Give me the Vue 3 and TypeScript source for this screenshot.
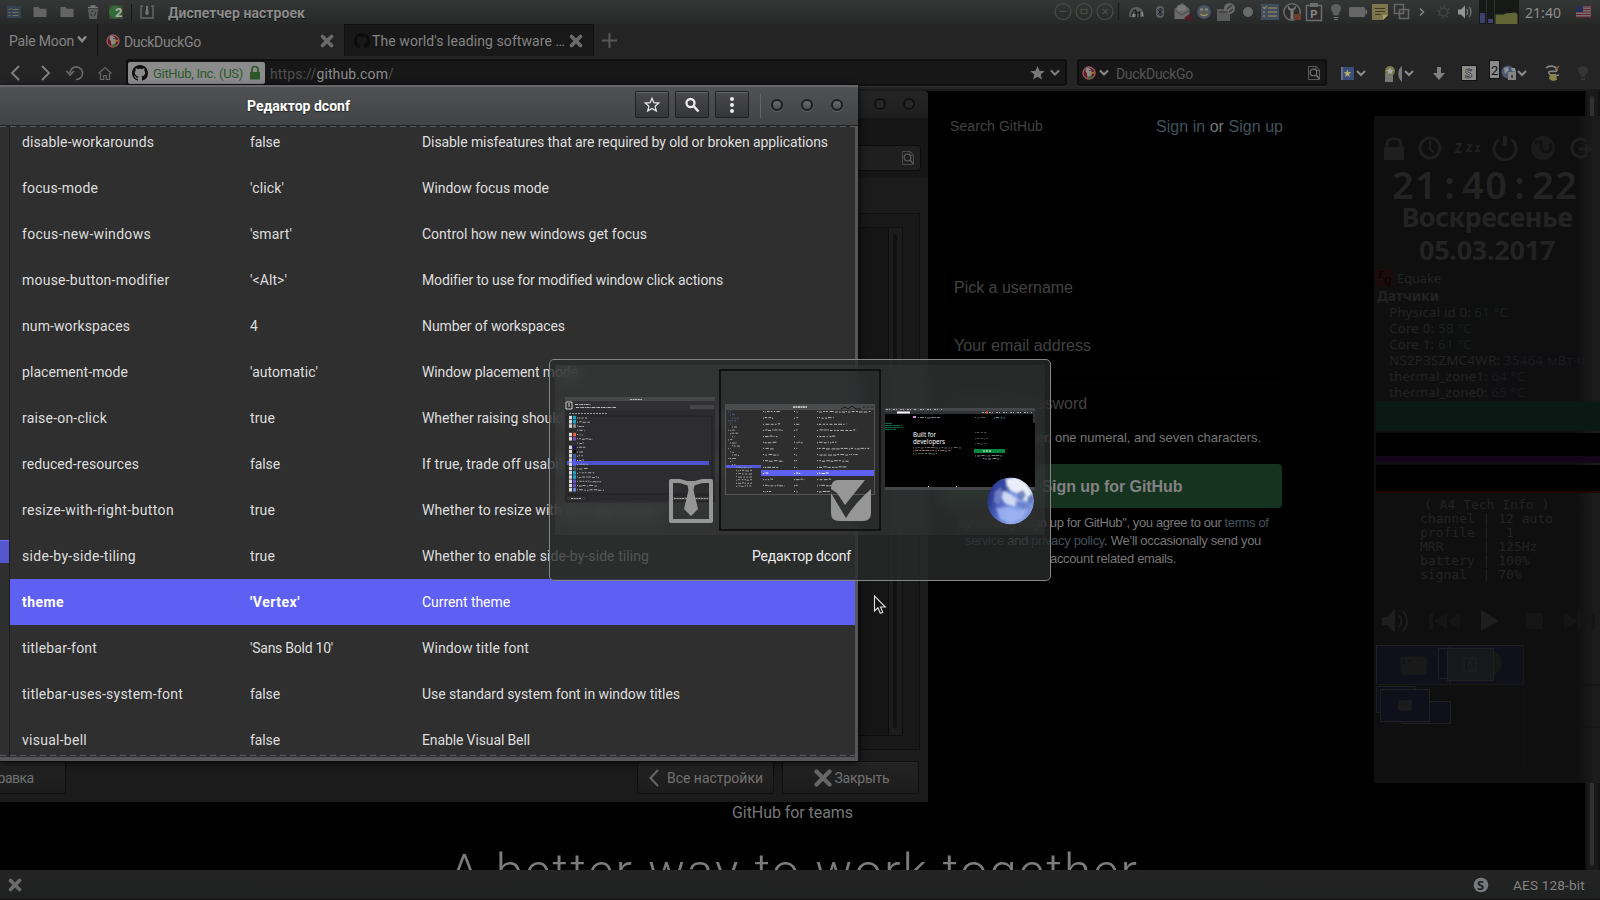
<script setup lang="ts">
interface Setting { name: string; nameW: number; value: string; valueW: number; text: string; textW: number; on?: boolean }
interface Icon { w: number; art: string }
interface Dash { x: number; y: number; w: number; h: number; c: string }

// Adjusts tracking so that a label takes the given width.
const vFit = {
  mounted(el: HTMLElement, binding: { value: number }) {
    const natural = el.getBoundingClientRect().width
    const count = (el.textContent ?? '').trim().length
    if (count > 1 && natural > 0) el.style.letterSpacing = `${((binding.value - natural) / count).toFixed(3)}px`
  },
}

const settings: Setting[] = [
  { name: 'disable-workarounds', nameW: 132, value: 'false', valueW: 30, text: 'Disable misfeatures that are required by old or broken applications', textW: 406 },
  { name: 'focus-mode', nameW: 76, value: "'click'", valueW: 34, text: 'Window focus mode', textW: 127 },
  { name: 'focus-new-windows', nameW: 129, value: "'smart'", valueW: 42, text: 'Control how new windows get focus', textW: 225 },
  { name: 'mouse-button-modifier', nameW: 147, value: "'<Alt>'", valueW: 37, text: 'Modifier to use for modified window click actions', textW: 300 },
  { name: 'num-workspaces', nameW: 108, value: '4', valueW: 8, text: 'Number of workspaces', textW: 143 },
  { name: 'placement-mode', nameW: 106, value: "'automatic'", valueW: 68, text: 'Window placement mode', textW: 156 },
  { name: 'raise-on-click', nameW: 85, value: 'true', valueW: 25, text: 'Whether raising should be a side-effect of other user interactions', textW: 398 },
  { name: 'reduced-resources', nameW: 117, value: 'false', valueW: 30, text: 'If true, trade off usability for less resource usage', textW: 308 },
  { name: 'resize-with-right-button', nameW: 152, value: 'true', valueW: 25, text: 'Whether to resize with the right button', textW: 240 },
  { name: 'side-by-side-tiling', nameW: 114, value: 'true', valueW: 25, text: 'Whether to enable side-by-side tiling', textW: 227 },
  { name: 'theme', nameW: 42, value: "'Vertex'", valueW: 50, text: 'Current theme', textW: 88, on: true },
  { name: 'titlebar-font', nameW: 75, value: "'Sans Bold 10'", valueW: 83, text: 'Window title font', textW: 107 },
  { name: 'titlebar-uses-system-font', nameW: 161, value: 'false', valueW: 30, text: 'Use standard system font in window titles', textW: 258 },
  { name: 'visual-bell', nameW: 65, value: 'false', valueW: 30, text: 'Enable Visual Bell', textW: 108 },
]

const hub = 'M8 0C3.58 0 0 3.58 0 8c0 3.54 2.29 6.53 5.47 7.59.4.07.55-.17.55-.38 0-.19-.01-.82-.01-1.49-2.01.37-2.53-.49-2.69-.94-.09-.23-.48-.94-.82-1.13-.28-.15-.68-.52-.01-.53.63-.01 1.08.58 1.23.82.72 1.21 1.87.87 2.33.66.07-.52.28-.87.51-1.07-1.78-.2-3.64-.89-3.64-3.95 0-.87.31-1.59.82-2.15-.08-.2-.36-1.02.08-2.12 0 0 .67-.21 2.2.82.64-.18 1.32-.27 2-.27s1.36.09 2 .27c1.53-1.04 2.2-.82 2.2-.82.44 1.1.16 1.92.08 2.12.51.56.82 1.27.82 2.15 0 3.07-1.87 3.75-3.65 3.95.29.25.54.73.54 1.48 0 1.07-.01 1.93-.01 2.2 0 .21.15.46.55.38A8.01 8.01 0 0 0 16 8c0-4.42-3.58-8-8-8z'

const duck = `<circle cx="11" cy="12" r="7" fill="#6b1a20"/><circle cx="11" cy="12" r="6" fill="none" stroke="#8a8a8a" stroke-width=".9"/>
<path d="M8.2 7.5c3-1.2 5.4.6 5.4 3.5l-.3 6h-3.600l-1-5c-1.200-1-1.600-3-.5-4.500z" fill="#8b8b8b"/><path d="M12 11.500l4-.4.200 1.200-4 .9z" fill="#a08436"/><path d="M10.500 15l4 .5-1 2.300h-3z" fill="#2a6a2c"/><circle cx="12" cy="9.500" r=".8" fill="#26354e"/>`
const folder = '<path d="M4 7h5l1.500 1.700H17V17H4z" fill="#646464"/>'
const cross = '<path d="M6.500 7.500l9 9m0-9l-9 9" stroke="#6a6a6a" stroke-width="3.800" stroke-linecap="round"/>'
const chevron = '<path d="M1 9.500l4 4 4-4" fill="none" stroke="#8b8b8b" stroke-width="2"/>'
const pageSearch = '<path d="M5.500 5.500h8l3 3.500v9.500h-11z M13 5.500v4h3.500" fill="none" stroke="#5a5a5a" stroke-width="1"/><circle cx="10.500" cy="11.500" r="3.300" fill="none" stroke="#6e6e6e" stroke-width="1.300"/><path d="M13 14l3.500 4" stroke="#6e6e6e" stroke-width="1.600"/>'

const launchers: Icon[] = [
  { w: 27, art: '<rect x="4.500" y="6" width="14" height="12" fill="#334056"/><path d="M6 9l1 1 2-2M10 9.500h6M10 12.500h6M10 15.500h6M6 12.500h2M6 15.500h2" stroke="#75744f" stroke-width="1" fill="none"/>' },
  { w: 27, art: folder }, { w: 27, art: folder },
  { w: 24, art: '<path d="M6 9h10l-1.200 10H7.200z" fill="#5d5d5d"/><path d="M6 7.500h10M8.500 6h5" stroke="#777" stroke-width="1.300"/><circle cx="11" cy="13.500" r="2.500" fill="none" stroke="#2b2b2b" stroke-dasharray="3 1.500"/>' },
  { w: 24, art: '<rect x="3" y="5" width="14" height="14" fill="#394537"/><circle cx="9.500" cy="12" r="6.500" fill="#356b32"/><text x="9" y="16.500" font-size="13" font-weight="700" font-family="Roboto" fill="#aaa">2</text>' },
]

const tray: Icon[] = [
  { w: 25, art: '<path d="M3.500 17c0-7 3-10 8-10 4 0 7 4 7 10z" fill="#5d5d5d"/><path d="M6 16c1-5 2-6 4-6v3h4v-2M11 11v6M14 12v5" stroke="#202020" fill="none" stroke-width="1.300"/><path d="M7 14h2v3H7zM16 12h1.500v4H16z" fill="#8a8a8a"/>' },
  { w: 22, art: '<rect x="7" y="6" width="8" height="12" rx="4" fill="#5a5f66"/><path d="M8.500 9.500l5 4.500-2.500 2V8l2.500 2-5 4.500" fill="none" stroke="#1f1f1f"/>' },
  { w: 22, art: '<path d="M3.500 9l7.500-6 7.500 6v10h-15z" fill="#6a6a6a"/><path d="M3.500 10l7.500 5 7.500-5" fill="none" stroke="#444"/><rect x="6.500" y="5.500" width="8" height="5" fill="#7a7a7a"/><path d="M20 13v9l-7-4z" fill="#571926"/>' },
  { w: 22, art: '<circle cx="11" cy="12" r="6.300" fill="#565b55" stroke="#444d68" stroke-width="1.500"/><path d="M7 9.500h3M12 9.500h3" stroke="#868686" stroke-width="2"/><path d="M7.500 14c2 2 5 2 7 0" fill="none" stroke="#99955c" stroke-width="1.300"/>' },
  { w: 22, art: '<path d="M2 9h13v12H2z" fill="#5b5b5b"/><circle cx="14.500" cy="8.500" r="5.500" fill="#696969"/><path d="M4 12h9M12 9l5-4M14 12l4-3" stroke="#333" stroke-width="1.200"/>' },
  { w: 22, art: '<circle cx="11" cy="12" r="5" fill="#6a6a6a"/>' },
  { w: 22, art: '<rect x="2" y="4" width="18" height="16" fill="#414c5f"/><path d="M9 8h9M9 12h9M9 16h9M4 12h2M4 16h2M4 7l1.500 1.500L8 6" stroke="#827f5d" stroke-width="1.300" fill="none"/>' },
  { w: 22, art: '<circle cx="11" cy="12" r="8.200" fill="#2d2d2d" stroke="#6b6b6b" stroke-width="1.500"/><path d="M7 5.500c-1 3 1 5 2.500 5v9h3v-9c2-1 3-3 2-5l-2 3h-3z" fill="#7a7a7a"/><rect x="13" y="14" width="7" height="6" fill="#6c3c2b"/>' },
  { w: 22, art: '<path d="M3.500 5.500h15v15h-15z" fill="#2c2c2c" stroke="#6d6d6d" stroke-width="1.500"/><path d="M7 3h8v4H7z" fill="#6d6d6d"/><text x="7.200" y="17.500" font-size="11" font-weight="700" font-family="Roboto" fill="#8a8a8a">P</text>' },
  { w: 22, art: '<path d="M6 8.500c0-6 10-6 10 0 0 3-2.500 4-2.500 7h-5c0-3-2.500-4-2.500-7z" fill="#5f5f5f"/><path d="M8.500 17.500h5M9 19.500h4" stroke="#757575"/>' },
  { w: 22, art: '<rect x="2" y="7" width="16" height="10" rx="1.500" fill="#676767"/><path d="M18.500 9.500c2 0 2 5 0 5z" fill="#7a7a7a"/>' },
  { w: 22, art: '<path d="M3 4h16v11l-5 5H3z" fill="#7d754b"/><path d="M6 8.500h10M6 11.500h10M6 14.500h6" stroke="#3d3923"/><path d="M19 15l-5 5v-5z" fill="#aaa06d"/>' },
  { w: 20, art: '<path d="M4.500 4.500h9v9h-9zM9.500 9.500h9v9h-9z" fill="#303030" stroke="#666" stroke-width="1.600"/>' },
  { w: 20, art: '<path d="M10 8.500l3.500 3.500-3.500 3.500" fill="none" stroke="#888" stroke-width="1.400"/>' },
  { w: 23, art: '<circle cx="12" cy="12" r="4" fill="none" stroke="#494949" stroke-width="1.200"/><circle cx="12" cy="12" r="5.800" fill="none" stroke="#494949" stroke-width="1.500" stroke-dasharray="1.500 3.050"/>' },
  { w: 22, art: '<path d="M4 9.500h3l4-4v13l-4-4H4z" fill="#959595"/><path d="M12.500 9c1.500 1.500 1.500 4.500 0 6M15 7c2.500 2.500 2.500 7.500 0 10" fill="none" stroke="#777" stroke-width="1.300"/>' },
]

const seeded = (seed: number) => () => ((seed = (seed * 16807) % 2147483647) / 2147483647)

function words(seed: number, x: number, y: number, w: number, color: string): Dash[] {
  const rnd = seeded(seed)
  const out: Dash[] = []
  let at = x
  while (at < x + w) {
    const len = 1 + rnd() * 3
    out.push({ x: at, y: y + Math.round(rnd()) * 0.5, w: Math.min(len, x + w - at), h: 1, c: color })
    at += len + 0.6 + rnd()
  }
  return out
}

const managerLines: Dash[] = [10, 14, 7, 8, 6, 16, 7, 9, 7, 6, 7, 12, 11, 18, 22, 24, 20, 27]
  .flatMap((w, i) => words(i * 31 + 7, 12, 20 + i * 4.25, w, '#a5a5a5'))
const managerIcons = ['#1aa6c9', '#1aa6c9', '#888', '#2e2e2e', '#f0603e', '#7a4db8', '#2e2e2e', '#221060', '#101010', '#3b62a8', '#5b5bf0', '#5b5bf0', '#555', '#1aa6c9', '#1aa6c9', '#6a50c8', '#6a50c8', '#6a88e0']
const editorLines: Dash[] = settings.flatMap((s, i) => {
  const y = 7 + i * 6.15
  const c = s.on ? '#fff' : '#b4b4b4'
  return [
    ...words(i + 11, 38, y, s.nameW / 7.5, c),
    ...words(i + 41, 69, y, s.valueW / 8, c),
    ...words(i + 71, 92, y, s.textW / 7.6, c),
  ]
})
const treeLines: Dash[] = Array.from({ length: 25 }, (_, i) => words(i + 5, 3 + (i > 17 ? 8 : (i % 3) * 2), 7 + i * 3.1, i > 17 ? 16 : 3 + (i % 4) * 2, i < 5 ? '#53578c' : '#999')).flat()
const siteLines: Dash[] = [
  ...words(2, 33, 9, 22, '#8899ab'), ...words(3, 90, 9, 10, '#667'), ...words(4, 109, 9, 11, '#6aa0c0'),
  ...words(5, 28, 39, 48, '#777'), ...words(6, 28, 42, 38, '#a77'), ...words(9, 28, 45, 24, '#777'),
  ...words(8, 90, 24, 12, '#555'), ...words(12, 90, 30, 13, '#555'), ...words(14, 90, 35, 12, '#555'),
  ...words(15, 90, 47, 28, '#889'), ...words(16, 98, 50, 18, '#99a'),
]

const sensors = [
  { label: 'Physical id 0:', value: '61 °C', w: 119, hue: 'cool' },
  { label: 'Core 0:', value: '58 °C', w: 83, hue: 'cool' },
  { label: 'Core 1:', value: '61 °C', w: 83, hue: 'cool' },
  { label: 'NS2P3SZMC4WR:', value: '35464 мВт·ч', w: 196, hue: 'blue' },
  { label: 'thermal_zone1:', value: '64 °C', w: 136, hue: 'blue' },
  { label: 'thermal_zone0:', value: '65 °C', w: 136, hue: 'blue' },
]
const mouseInfo = ['channel | 12 auto', 'profile |  1', 'MRR     | 125Hz', 'battery | 100%', 'signal  | 70%']
</script>

<template>
  <div class="desktop">
    <div class="browser">
      <header class="panel">
        <svg v-for="(i, n) in launchers" :key="n" :width="i.w" height="24" :viewBox="`${(22 - i.w) / 2} 0 ${i.w} 24`" v-html="i.art" />
        <span class="rule" />
        <svg width="31" height="24" viewBox="0 0 31 24"><path d="M11 6H9v12h12V6h-2" fill="none" stroke="#686868" stroke-width="1.400" /><path d="M13.500 6h3l-.7 2 1 5.500-1.800 2-1.800-2 1-5.500z" fill="#777" /></svg>
        <strong v-fit="137" class="panel-title">Диспетчер настроек</strong>
        <div class="tray">
          <svg width="72" height="24" viewBox="0 0 72 24" fill="none" stroke="#4c4c48" stroke-width="1.200"><circle cx="11" cy="11.500" r="8" /><circle cx="32" cy="11.500" r="8" /><circle cx="53" cy="11.500" r="8" /><path d="M7.500 11.500h7M29 9.500h6v4h-6zM50.500 9l5 5m0-5l-5 5" /><path d="M66.500 3v17" stroke="#1c1c1c" /></svg>
          <svg v-for="(i, n) in tray" :key="n" :width="i.w" height="24" :viewBox="`${(22 - i.w) / 2} 0 ${i.w} 24`" v-html="i.art" />
          <svg class="load" width="40" height="24" viewBox="0 0 40 24"><path d="M0 0h7v24H0zM8 0h7v24H8zM16 0h24v24H16z" fill="#171917" /><path d="M1 13h5v10H1zM9 19h5v4H9z" fill="#3c4172" /><path d="M16.500 14.500h8l2-1 10-1 2 2V24h-22z" fill="#626637" /></svg>
          <span v-fit="36" class="clock">21:40</span>
          <svg width="32" height="24" viewBox="0 0 32 24"><path d="M15 6h15v11H15z" fill="#707070" /><path d="M15 7h15M15 9.500h15M15 12h15M15 14.500h15M15 17h15" stroke="#70242e" stroke-width="1.200" /><path d="M15 6h7v6h-7z" fill="#262e58" /></svg>
        </div>
      </header>

      <nav class="tabs">
        <div class="app-menu"><span v-fit="65">Pale Moon</span><svg width="14" height="22" viewBox="0 0 14 22"><path d="M3 7.500l4 4.500 4-4.500" fill="none" stroke="#898989" stroke-width="2.500" /></svg></div>
        <div class="tab">
          <svg width="22" height="24" v-html="duck" />
          <span v-fit="77">DuckDuckGo</span>
          <svg class="close" width="22" height="24" v-html="cross" />
        </div>
        <div class="tab current">
          <svg width="16" height="16" viewBox="0 0 16 16"><path :d="hub" fill="#0c0c0c" /></svg>
          <span v-fit="193">The world's leading software …</span>
          <svg class="close" width="22" height="24" v-html="cross" />
        </div>
        <svg width="32" height="32" viewBox="0 0 32 32"><path d="M8 16.500h15M15.500 9v15" stroke="#585858" stroke-width="2" /></svg>
      </nav>

      <nav class="nav">
        <svg width="126" height="30" viewBox="0 0 126 30" fill="none" stroke="#808080" stroke-width="1.900"><path d="M19 8l-7 7 7 7M42 8l7 7-7 7" /><path d="M70 15a6.300 6.300 0 1 1 6 6.500M66.500 13l3.500 4 4-4" stroke="#6b6b6b" stroke-width="1.600" /><path d="M98.500 15.500l6.500-6 6.500 6M100.500 15v6.500h3.200v-4h2.600v4h3.200V15" stroke="#686868" stroke-width="1.200" /></svg>
        <div class="url">
          <div class="identity">
            <svg width="16" height="16" viewBox="0 0 16 16"><path :d="hub" fill="#111" /></svg>
            <span v-fit="90">GitHub, Inc. (US)</span>
            <svg width="12" height="16" viewBox="0 0 12 16"><path d="M3 8V4.500c0-4 6-4 6 0V8" fill="none" stroke="#2b572b" stroke-width="1.700" /><rect x="1" y="7" width="10" height="7.500" fill="#2b572b" /></svg>
          </div>
          <span v-fit="124" class="address">https://<b>github.com</b>/</span>
          <svg class="url-end" width="40" height="24" viewBox="0 0 40 24"><path d="M12.500 5l2 4.800 5.200.4-4 3.300 1.300 5.100-4.500-2.800-4.500 2.800 1.300-5.100-4-3.300 5.200-.4z" fill="#777" /><path d="M26 9.500l4 4 4-4" fill="none" stroke="#828282" stroke-width="2" /></svg>
        </div>
        <div class="search">
          <svg width="22" height="24" v-html="duck" /><svg width="11" height="24" v-html="chevron" />
          <span v-fit="77">DuckDuckGo</span>
          <svg class="close" width="22" height="24" v-html="pageSearch" />
        </div>
        <svg width="273" height="30" viewBox="0 0 273 30">
          <path d="M14 9h13v13H14z" fill="#3b4d79" /><path d="M14 9h2v13h-2z" fill="#66718a" /><path d="M20.500 11.500l1.100 2.600 2.800.2-2.200 1.800.7 2.800-2.400-1.500-2.400 1.500.7-2.800-2.200-1.800 2.800-.2z" fill="#b0aa70" /><path d="M30 13l4 4 4-4M78 13l4 4 4-4M191 13l4 4 4-4" fill="none" stroke="#8b8b8b" stroke-width="2" />
          <path d="M58 15h8v9h-8z" fill="#777" /><circle cx="63" cy="13" r="5" fill="#77784b" /><path d="M63 9.500l1 2.300 2.600.3-1.900 1.800.6 2.500-2.300-1.300-2.300 1.300.6-2.500-1.900-1.800 2.600-.3z" fill="#aaa" /><path d="M75 8c-5 3-5 12 0 16z" fill="#777" />
          <path d="M110 9h4v6h4l-6 7-6-7h4z" fill="#808080" /><rect x="134.500" y="7.500" width="15" height="15" fill="#8b8b8b" stroke="#111" /><text x="138" y="20" font-size="13" font-weight="700" font-family="Noto Sans" fill="#aaa" stroke="#333" stroke-width=".8">S</text>
          <circle cx="181" cy="14" r="6.500" fill="#4c5871" /><path d="M177 10l4-1 1 3-4 4zM184 10h4l1 4-4-1z" fill="#8a9298" /><rect x="181" y="14" width="8" height="8" fill="#858585" /><rect x="184" y="17" width="2" height="3" fill="#444" />
          <rect x="162.500" y="2.500" width="10" height="18" fill="#8b8b8b" stroke="#111" /><text x="164" y="16.500" font-size="13" font-family="Roboto" fill="#111">2</text>
          <path d="M219 10c4-4 11-1 11 2s-7 0-8 2 3 5 10 3" fill="none" stroke="#858585" stroke-width="1.700" /><path d="M223 16h6l1 6-4 1-4-2z" fill="#87854a" /><path d="M228 12l4-4" stroke="#875a33" stroke-width="1.500" />
          <path d="M251 12c0-5 10-5 10 0 0 3-3 4-3 7h-4c0-3-3-4-3-7zM254 20h4v2h-4z" fill="#353535" />
        </svg>
      </nav>

      <main class="page">
        <span v-fit="93" class="gh-search">Search GitHub</span>
        <span v-fit="127" class="gh-login"><a>Sign in</a> or <a>Sign up</a></span>
        <form class="signup">
          <div class="field"><span v-fit="119">Pick a username</span></div>
          <div class="field"><span v-fit="137">Your email address</span></div>
          <div class="field"><span v-fit="133">Create a password</span></div>
          <p v-fit="338" class="hint">Use at least one letter, one numeral, and seven characters.</p>
          <div class="join"><span v-fit="141">Sign up for GitHub</span></div>
          <div class="terms"><span v-fit="311">By clicking "Sign up for GitHub", you agree to our <a>terms of</a></span><span v-fit="296"><a>service</a> and <a>privacy policy</a>. We’ll occasionally send you</span><span v-fit="126">account related emails.</span></div>
        </form>
        <div class="teams"><span v-fit="121">GitHub for teams</span></div>
        <h1 v-fit="690">A better way to work together</h1>
        <div class="scrollbar" />
      </main>

      <footer class="addons">
        <svg width="22" height="24" viewBox="0 0 22 24" v-html="cross" />
        <svg class="noscript" width="18" height="18" viewBox="0 0 18 18"><circle cx="9" cy="9" r="7.300" fill="#777b7e" /><text x="5" y="13.500" font-size="13" font-weight="700" font-family="Noto Sans" fill="#1e2022">S</text></svg>
        <span v-fit="72">AES 128-bit</span>
      </footer>
    </div>

    <aside class="gadgets">
      <svg width="226" height="56" viewBox="0 0 226 56" fill="none" stroke="#1f1f1f" stroke-width="3"><path d="M55 8h115M56 11h115" stroke-width="1" stroke="#151515" stroke-dasharray="1 1" /><path d="M10 31h20v13H10z" fill="#1f1f1f" stroke="none" /><path d="M13 31v-3c0-7 14-7 14 0v3" /><circle cx="56" cy="32" r="10" /><path d="M56 25v8l4 4M82 28h5l-5 8h6M93 29h4l-4 6h5M102 30h3l-3 5h4" stroke-width="2" /><path d="M125 23.500a11 11 0 1 0 12 0" /><path d="M131 20v10" stroke-width="4.500" /><circle cx="169" cy="32" r="12" fill="#1b1b1b" stroke="none" /><path d="M161 26h6v5a5 5 0 1 0 9-3" stroke="#101010" stroke-width="3" /><path d="M213 25.500a9 9 0 1 0 0 13M205 33h10" /><path d="M211 28l9 5-9 5z" fill="#1f1f1f" stroke="none" /></svg>
      <div v-fit="189" class="time">21<i>:</i>40<i>:</i>22</div>
      <div class="day"><span v-fit="171">Воскресенье</span></div>
      <div class="day"><span v-fit="136">05.03.2017</span></div>
      <div class="equake"><svg width="18" height="18"><rect width="18" height="18" rx="2" fill="#1c0b0c" /><text x="3" y="9" font-size="10" font-style="italic" font-weight="700" font-family="Liberation Serif" fill="#040404">E</text><text x="9" y="15" font-size="10" font-style="italic" font-weight="700" font-family="Liberation Serif" fill="#040404">Q</text></svg><span v-fit="44">Equake</span></div>
      <div class="sensor-head"><span v-fit="62">Датчики</span></div>
      <div v-for="s in sensors" :key="s.label" class="sensor"><span v-fit="s.w">{{ s.label }} <em :class="s.hue">{{ s.value }}</em></span></div>
      <div class="graph green" /><div class="graph violet" /><div class="graph red" />
      <pre class="mouse-head">( A4 Tech Info )</pre>
      <pre v-for="m in mouseInfo" :key="m" class="mouse">{{ m }}</pre>
      <svg class="media" width="226" height="32" viewBox="0 0 226 32" fill="#1e1e1e"><path d="M8 12h5l8-8v24l-8-8H8z" /><path d="M25 10q5 6 0 12M29 6q8 10 0 20" fill="none" stroke="#1e1e1e" stroke-width="2" /><path d="M107 5l18 11-18 10z" /><path d="M55 8h4v16h-4zM73 8v16l-14-8zM86 8v16l-13-8zM152 8h17v16h-17zM190 8l14 8-14 8zM204 8l13 8-13 8zM217 8h4v16h-4z" fill="#151515" /></svg>
      <svg width="226" height="140" viewBox="0 0 226 140" fill="#10101a" stroke="#202022"><path d="M2.500 2.500h147v39h-147zM76 2v39" /><rect x="64.500" y="5.500" width="55" height="30" /><circle cx="116" cy="20" r="12" fill="#171716" stroke="none" /><rect x="73.500" y="5.500" width="46" height="32" fill="#17181a" /><path d="M90 15h12v13H90zM96 17l2 7-2 3-2-3z" fill="none" /><rect x="26.500" y="13.500" width="26" height="18" rx="2" fill="#191919" stroke="#151517" /><path d="M28 17l3 2-3 2M34 18h3" fill="none" stroke="#0d0d0d" /><path d="M2.500 43.500h39v26h-39zM27.500 58.500h49v22h-49z" /><rect x="6.500" y="46.500" width="49" height="32" /><path d="M25 58h12v9H25z" fill="#1b1b1b" /><path d="M76 82v44M150 0v126M78 84h148M0 42h226" stroke="#121212" fill="none" /></svg>
    </aside>

    <section class="manager">
      <div class="manager-bar"><span class="knob" /><span class="knob" /></div>
      <div class="manager-head"><div class="manager-search"><svg width="22" height="24" v-html="pageSearch" /></div></div>
      <div class="manager-frame"><div class="manager-list"><div class="groove" /></div></div>
      <div class="manager-buttons">
        <div class="btn help"><span v-fit="52">Справка</span></div>
        <div class="btn"><svg width="12" height="20" viewBox="0 0 12 20"><path d="M10 2L2.500 10 10 18" fill="none" stroke="#666" stroke-width="2" /></svg><span v-fit="96">Все настройки</span></div>
        <div class="btn tight"><svg width="18" height="20" viewBox="0 0 18 20"><path d="M2.500 3.500l13 13m0-13l-13 13" stroke="#666" stroke-width="4.200" stroke-linecap="round" /></svg><span v-fit="55">Закрыть</span></div>
      </div>
    </section>

    <section class="editor">
      <div class="editor-bar">
        <strong v-fit="103" class="editor-title">Редактор dconf</strong>
        <div class="tool"><svg width="18" height="18" viewBox="0 0 18 18"><path d="M9 2.200l1.900 4.500 4.900.4-3.700 3.200 1.200 4.800L9 12.500l-4.300 2.600 1.200-4.800-3.700-3.200 4.900-.4z" fill="none" stroke="#eee" stroke-width="1.200" /></svg></div>
        <div class="tool"><svg width="18" height="18" viewBox="0 0 18 18"><circle cx="7.500" cy="7" r="4" fill="none" stroke="#eee" stroke-width="2.300" /><path d="M10.500 10l5 5.500" stroke="#eee" stroke-width="2.500" /></svg></div>
        <div class="tool"><svg width="18" height="18" viewBox="0 0 18 18" fill="#eee"><circle cx="9" cy="3" r="2" /><circle cx="9" cy="9" r="2" /><circle cx="9" cy="15" r="2" /></svg></div>
        <span class="divider" /><span class="knob" /><span class="knob" /><span class="knob" />
      </div>
      <div class="editor-body">
        <div class="tree"><div class="tree-on" /></div>
        <div class="rows">
          <div v-for="s in settings" :key="s.name" class="row" :class="{ on: s.on }">
            <div><span v-fit="s.nameW">{{ s.name }}</span></div>
            <div><span v-fit="s.valueW">{{ s.value }}</span></div>
            <div><span v-fit="s.textW">{{ s.text }}</span></div>
          </div>
        </div>
      </div>
    </section>

    <div class="switcher">
      <div class="thumbs">
        <div class="thumb">
          <svg width="162" height="162" viewBox="0 0 162 162">
            <g transform="translate(8 28)">
              <rect width="150" height="106" fill="#303032" /><rect width="150" height="4" fill="#48484b" /><path d="M65 2.500h12" stroke="#bbb" stroke-dasharray="2 .6" /><path d="M0 13h150v91H0z" fill="#2b2b2d" /><path d="M1 5h6v7H1zM4 6v4" fill="none" stroke="#ccc" /><path d="M10 7.500h16M11 10.500h40" stroke="#bbb" stroke-dasharray="3 .8 1 .5" /><path d="M125 8h24v4h-24z" fill="#454548" /><path d="M4 16.500h38" stroke="#999" stroke-dasharray="2 1" />
              <path d="M2 19h145v78H2z" fill="#2d2d2f" stroke="#1d1d1d" stroke-width=".7" /><path d="M2 64h142v4H2z" fill="#4e51d0" />
              <template v-for="(c, i) in managerIcons" :key="i"><rect x="4" :y="18.800 + i * 4.250" width="3" height="3.500" :fill="i === 3 || i === 6 ? '#2d2d2f' : '#d9d9d9'" /><rect x="8" :y="18.800 + i * 4.250" width="3" height="3.500" :fill="c" /></template>
              <rect v-for="(d, i) in managerLines" :key="'m' + i" :x="d.x" :y="d.y" :width="d.w" :height="d.h" :fill="d.c" />
              <path d="M1 99h21v5H1zM106 99h43v5h-43z" fill="#37373a" stroke="#191919" stroke-width=".7" /><path d="M6 101.500h10M109 101.500h34" stroke="#aaa" stroke-dasharray="2 .7" />
            </g>
            <g transform="translate(112 110)" fill="#969696"><path d="M11 2H2v40h40V2h-9" fill="none" stroke="#969696" stroke-width="4" stroke-linejoin="round" /><path d="M9 0c4 0 8 2 10 2h6c2 0 6-2 10-2v4c-4 0-7 2-11 3h-4c-4-1-7-3-11-3z" /><path d="M18 4h8l-1.500 7L29 30l-7 7-7-7 4.500-19z" /></g>
          </svg>
        </div>
        <div class="thumb active">
          <svg width="158" height="158" viewBox="0 0 158 158">
            <g transform="translate(4 33)">
              <rect width="150" height="91" fill="#55555a" /><rect x="1" y="6" width="148" height="84" fill="#2e2e2e" /><rect width="150" height="5.500" fill="#4a4b4d" /><path d="M68 3h14" stroke="#ddd" stroke-width="1.500" stroke-dasharray="2 .5" /><path d="M116 5l4-2 3 2 4-3 4 3h5" stroke="#171717" fill="none" /><path d="M138 3h11" stroke="#222" stroke-dasharray="2 2" />
              <path d="M1 61h35v3H1z" fill="#5558d8" /><path d="M36 66h113v6H36z" fill="#5e60f2" />
              <rect v-for="(d, i) in treeLines" :key="'t' + i" :x="d.x" :y="d.y" :width="d.w" :height="d.h" :fill="d.c" /><rect v-for="(d, i) in editorLines" :key="i" :x="d.x" :y="d.y" :width="d.w" :height="d.h" :fill="d.c" />
            </g>
            <path d="M117 109h27l-20 25-8-12-6-4q0-9 7-9zM150 118v24q0 8-8 8h-24q-8 0-8-8v-20l15 25q9-15 25-29z" fill="#969696" />
          </svg>
        </div>
        <div class="thumb">
          <svg width="162" height="162" viewBox="0 0 162 162">
            <defs><linearGradient id="moon" x1="0" y1=".3" x2="1" y2=".6"><stop offset="0" stop-color="#1d2a6c" /><stop offset=".3" stop-color="#4a60c0" /><stop offset=".6" stop-color="#8aa2e8" /><stop offset="1" stop-color="#7d95dc" /></linearGradient><filter id="soft"><feGaussianBlur stdDeviation=".9" /></filter></defs>
            <g transform="translate(4 39)">
              <rect width="150" height="82" /><path d="M0 0h150v3H0z" fill="#454649" /><path d="M0 3h150v3H0z" fill="#303132" /><path d="M1 1.500h31M35 1.500h22M97 4.500h50" stroke="#aaa" stroke-dasharray="2 1 1 3" /><path d="M12 4.500h13" stroke="#fff" stroke-width="2" /><path d="M101 4.500h2" stroke="#ed5130" stroke-width="2" />
              <path d="M0 15.500h8M0 17.500h17M0 19.500h18M0 21.500h11" stroke="#0b6a46" stroke-dasharray="7 1" /><path d="M28 9h3" stroke="#e57be8" stroke-width="2" />
              <text x="28" y="29" font-size="7" font-family="Noto Sans" fill="#fff" textLength="23" lengthAdjust="spacingAndGlyphs">Built for</text><text x="28" y="36" font-size="7" font-family="Noto Sans" fill="#fff" textLength="32" lengthAdjust="spacingAndGlyphs">developers</text>
              <rect v-for="(d, i) in siteLines" :key="i" :x="d.x" :y="d.y" :width="d.w" height=".9" :fill="d.c" /><path d="M89 41h31v4H89z" fill="#078840" /><path d="M98 43h8" stroke="#fff" stroke-dasharray="2 1" /><path d="M0 79h150v3H0z" fill="#454649" /><path d="M43 78.500h1M71 78.500h1" stroke="#fff" /><path d="M149 6v9" stroke="#666" />
            </g>
            <clipPath id="disc"><circle cx="129.500" cy="132" r="23.500" /></clipPath>
            <g clip-path="url(#disc)"><circle cx="129.500" cy="132" r="23.500" fill="url(#moon)" /><g filter="url(#soft)"><path d="M115 112l8-4 4 5-1 8-5 3-3 9-6 2-2-10z" fill="#33449f" /><path d="M114 123l6-5 2 8-4 10-5-3z" fill="#7c8ace" opacity=".8" /><path d="M125 110l10-2 10 6 6 10-4 8-5-1-4-6-8-3-4-5z" fill="#e9eef8" /><path d="M122 122l8 3 8 8-5 4-8-2-4-5z" fill="#cfdaf2" /><path d="M136 124l6-3 3 5-3 5-5-2zM146 128l5-3 1 8-5 2zM124 116l4 2 1 4-4 1z" fill="#5670b4" opacity=".8" /><path d="M134 132l8 1 8 5-8 2-7-3z" fill="#6079c4" opacity=".7" /><path d="M115 139l12-1 9 4 10-2-5 10-11 4-11-4z" fill="#9fb6f4" opacity=".8" /></g></g>
          </svg>
        </div>
      </div>
      <div class="caption"><span v-fit="99">Редактор dconf</span></div>
    </div>

    <svg class="pointer" width="14" height="20" viewBox="0 0 14 20"><path d="M1.500 1v15l3.500-3.200 2.300 5.500 2.500-1-2.300-5.300h4.800z" fill="#111" stroke="#ddd" stroke-width="1.100" /></svg>
  </div>
</template>

<style>
html, body { margin: 0; background: #000; overflow: hidden; }
</style>

<style scoped>
.desktop { position: relative; width: 1600px; height: 900px; overflow: hidden; background: #000; font: 14px/18px Roboto, "Noto Sans", sans-serif; color: #848484; }
.desktop * { box-sizing: border-box; }
span, strong { white-space: nowrap; display: inline-block; }
svg { display: block; flex: none; }
b, em, i { font-weight: inherit; font-style: normal; }

.browser { display: flex; flex-direction: column; height: 900px; }
.panel { display: flex; align-items: center; height: 24px; background: linear-gradient(#353736, #272828); flex: none; }
.rule { width: 1px; height: 17px; margin-left: 2px; background: #191919; }
.panel-title { margin: 1px 0 0 5px; color: #8b8b8b; text-shadow: 0 1px #111; }
.tray { display: flex; align-items: center; margin-left: auto; width: 548px; }
.load { margin-left: 3px; }
.clock { margin: 1px 0 0 6px; font-family: "Noto Sans", sans-serif; color: #8c8c8c; }

.tabs { display: flex; height: 32px; background: #242424; flex: none; }
.tabs span { padding-top: 1px; }
.app-menu { display: flex; align-items: center; width: 98px; padding-left: 9px; border-right: 1px solid #151515; }
.app-menu svg { margin-left: 1px; }
.tab { display: flex; align-items: center; width: 246px; padding: 2px 6px 0 4px; }
.close { margin-left: auto; }
.tab.current { width: 250px; padding: 0 8px 0 9px; background: #181818; border: 1px solid #101010; border-bottom: 0; }
.tab.current svg:first-child { margin-right: 2px; }

.nav { display: flex; align-items: center; height: 35px; background: #242424; border-bottom: 2px solid #1b1b1b; flex: none; }
.nav span { padding-top: 2px; }
.url { display: flex; align-items: center; width: 941px; height: 27px; background: #171717; border: 2px solid #0f0f0f; border-radius: 3px; box-shadow: 0 1px #303030; }
.identity { display: flex; align-items: center; width: 137px; height: 22px; padding-left: 4px; background: #8b8b8b; color: #2b572b; border-radius: 2px; font-size: 13px; }
.identity span { margin: 0 6px 0 5px; }
.address { margin-left: 5px; color: #4f4f4f; }
.address b { color: #8b8b8b; }
.url-end { margin-left: auto; }
.search { display: flex; align-items: center; width: 250px; height: 27px; margin-left: 10px; background: #171717; border: 2px solid #0f0f0f; border-radius: 3px; color: #555; box-shadow: 0 1px #303030; }
.search svg:first-child { margin-left: -1px; margin-right: -1px; }
.search span { margin-left: 6px; }

.page { position: relative; flex: 1; overflow: hidden; background: #000; font-family: "Liberation Sans", Arial, sans-serif; color: #777; }
.page a { color: #41525d; }
.gh-search { position: absolute; left: 950px; top: 26px; color: #424242; }
.gh-login { position: absolute; left: 1156px; top: 27px; font-size: 16px; }
.signup { position: absolute; left: 944px; top: 176px; width: 338px; }
.field { height: 40px; margin-bottom: 18px; padding: 11px 9px; border: 1px solid #030303; border-radius: 4px; font-size: 16px; color: #424242; }
.hint { position: relative; left: -21px; display: inline-block; margin: -12px 0 0; font-size: 13px; white-space: nowrap; vertical-align: top; }
.join { display: grid; place-items: center; height: 44px; margin: 5px 0 0 -3px; border-radius: 4px; background: #15331f; font-size: 16px; font-weight: 700; color: #828282; }
.join span { margin-left: 1px; padding-top: 1px; }
.terms { display: flex; flex-direction: column; align-items: center; margin-top: 6px; font-size: 13px; }
.teams { position: absolute; left: 732px; top: 713px; font-family: Roboto, sans-serif; font-size: 16px; }
h1 { position: absolute; left: 449px; top: 753px; margin: 0; font: 300 49px/56px Roboto, sans-serif; white-space: nowrap; color: #7c7c7c; }
.scrollbar { position: absolute; right: 0; top: 0; width: 15px; height: 100%; background: #191919; border: solid #111; border-width: 0 2px; }
.scrollbar::after { content: ""; display: block; width: 4px; height: 770px; margin: 5px 0 0 3px; border-radius: 2px; background: #303030; }
.addons { display: flex; align-items: center; height: 30px; padding: 0 15px 0 4px; background: linear-gradient(#232423, #1f2020); border-bottom: 1px solid #111; flex: none; font-size: 13.500px; }
.noscript { margin: 0 23px 0 auto; }

.gadgets { position: absolute; left: 1374px; top: 116px; width: 226px; height: 667px; background: linear-gradient(90deg, transparent 202px, #1b1b1b 220px), #0f0f0f; color: #232323; font-family: "Noto Sans", sans-serif; overflow: hidden; }
.time { display: block; width: max-content; height: 42px; margin: -1px 0 0 18px; font-size: 38px; line-height: 26px; font-weight: 600; }
.time i { display: inline-block; width: 24px; text-align: center; }
.day { position: relative; top: -11px; height: 32px; margin-top: -1px; text-align: center; font-size: 27px; line-height: 32px; font-weight: 700; }
.day + .day { margin-top: 1px; }
.equake { display: flex; align-items: center; gap: 4px; height: 18px; margin: -8px 0 0 1px; font-size: 13px; }
.sensor-head { height: 16px; margin-top: 1px; padding-left: 3px; font-size: 14px; line-height: 16px; font-weight: 700; }
.sensor { height: 16px; padding-left: 15px; font-size: 13.300px; line-height: 16px; }
.cool { color: #14231b; }
.blue { color: #191a25; }
.graph { height: 30px; margin: 1px 0 2px 2px; background: #0b1914; }
.graph.violet { background: linear-gradient(#000 23px, #14061a 23px); }
.graph.red { height: 28px; background: #000; border-bottom: 2px solid #1d0505; }
.mouse-head, .mouse { margin: 0; height: 14px; font: 13px/14px "DejaVu Sans Mono", monospace; padding-left: 46px; }
.mouse-head { padding: 0 0 0 50px; margin-top: 5px; }
.media { margin: 23px 0 6px; }

.manager { position: absolute; left: 0; top: 91px; width: 928px; height: 711px; background: #1b1b1b; border-radius: 0 4px 0 0; overflow: hidden; }
.manager-bar { display: flex; justify-content: flex-end; align-items: center; gap: 16px; height: 27px; padding: 0 13px 2px 0; background: linear-gradient(#242424, #1e1e1e); }
.manager-head { display: flex; justify-content: flex-end; height: 60px; padding: 27px 7px 0 0; background: #161616; }
.manager-search { display: flex; justify-content: flex-end; align-items: center; width: 300px; height: 26px; padding-right: 1px; background: #1f1f1f; border: 1px solid #0c0c0c; border-radius: 3px; }
.manager-search svg { opacity: .7; }
.manager-frame { width: 919px; height: 537px; margin-top: 35px; margin-left: 1px; padding: 13px 16px 13px 0; border: 1px solid #0f0f0f; background: #181818; }
.manager-list { display: flex; justify-content: flex-end; height: 509px; border: 1px solid #0e0e0e; background: #151515; }
.groove { width: 14px; background: #1c1c1c; border-left: 1px solid #0c0c0c; padding: 6px 4px; }
.groove::after { content: ""; display: block; width: 4px; height: 494px; border-radius: 2px; background: #111; }
.manager-buttons { display: flex; gap: 8px; margin-top: 11px; padding-right: 9px; }
.btn { display: flex; justify-content: center; align-items: center; gap: 7px; width: 137px; height: 33px; background: linear-gradient(#232323, #1c1c1c); border: 1px solid #101010; border-radius: 3px; color: #717171; box-shadow: inset 0 1px #292929; }
.btn.tight { gap: 3px; padding-left: 2px; }
.help { width: 137px; margin: 0 auto 0 -71px; padding-left: 20px; }

.knob { width: 12px; height: 12px; border: 2px solid #1c1d1e; border-radius: 50%; background: linear-gradient(#6b6c6d, #4c4d4e); box-shadow: 0 1px #646566; flex: none; }
.manager .knob { border-color: #101010; background: #272727; box-shadow: 0 1px #272727; margin-left: 1px; }

.editor { position: absolute; left: 0; top: 85px; width: 858px; height: 676px; padding: 0 3px 4px 0; background: #55555a; border-top: 2px solid #68686c; box-shadow: 1px 2px 7px rgba(0, 0, 0, .75); }
.editor-bar { display: flex; align-items: center; height: 39px; margin-right: -3px; background: linear-gradient(#505153, #424344); border-bottom: 1px solid #222; padding-right: 15px; }
.editor-title { margin: 0 auto 0 247px; color: #fff; text-shadow: 0 1px 1px #222; }
.tool { display: grid; place-items: center; width: 34px; height: 27px; margin: -3px 6px 0 0; background: linear-gradient(#49494b, #343536); border: 1px solid #202122; border-radius: 2px; box-shadow: inset 0 1px #66676a; }
.divider { width: 1px; height: 24px; margin: 0 10px 0 5px; background: #666; }
.editor-bar .knob { margin-top: -3px; }
.editor-bar .knob + .knob { margin-left: 18px; }
.editor-body { display: flex; height: 631px; background: #2f2f2f; color: #dedede; overflow: hidden; position: relative; }
.editor-body::before, .editor-body::after { content: ""; position: absolute; left: 0; right: 0; top: 0; height: 1px; background: repeating-linear-gradient(90deg, #5b5b5b 0 6px, transparent 6px 10px); z-index: 1; }
.editor-body::after { top: auto; bottom: 1px; }
.tree { width: 10px; border-right: 1px solid #1c1c1c; padding-top: 414px; }
.tree-on { height: 23px; background: #5356cc; border-top: 1px solid #6a6cff; }
.rows { flex: 1; margin-top: -7px; }
.row { display: grid; grid-template-columns: 228px 172px 1fr; align-items: center; height: 46px; padding-left: 12px; padding-bottom: 1px; }
.row.on { background: #5e60f4; color: #fff; }
.row.on div:nth-child(-n+2) { font-weight: 700; }

.switcher { position: absolute; left: 549px; top: 359px; width: 502px; height: 222px; padding: 5px; border: 1.500px solid #868686; border-radius: 5px; background: rgba(42, 43, 43, .77); }
.thumbs { display: flex; width: 490px; height: 170px; padding: 4px 2px; backdrop-filter: blur(8px); background: rgba(255, 255, 255, .04); }
.thumb { width: 162px; height: 162px; flex: none; }
.active { border: 2px solid #111; background: rgba(20, 20, 22, .1); }
.caption { display: grid; justify-items: center; padding-top: 12px; color: #eee; }
.caption span { margin-left: 3px; }
.pointer { position: absolute; left: 873px; top: 595px; }
</style>
